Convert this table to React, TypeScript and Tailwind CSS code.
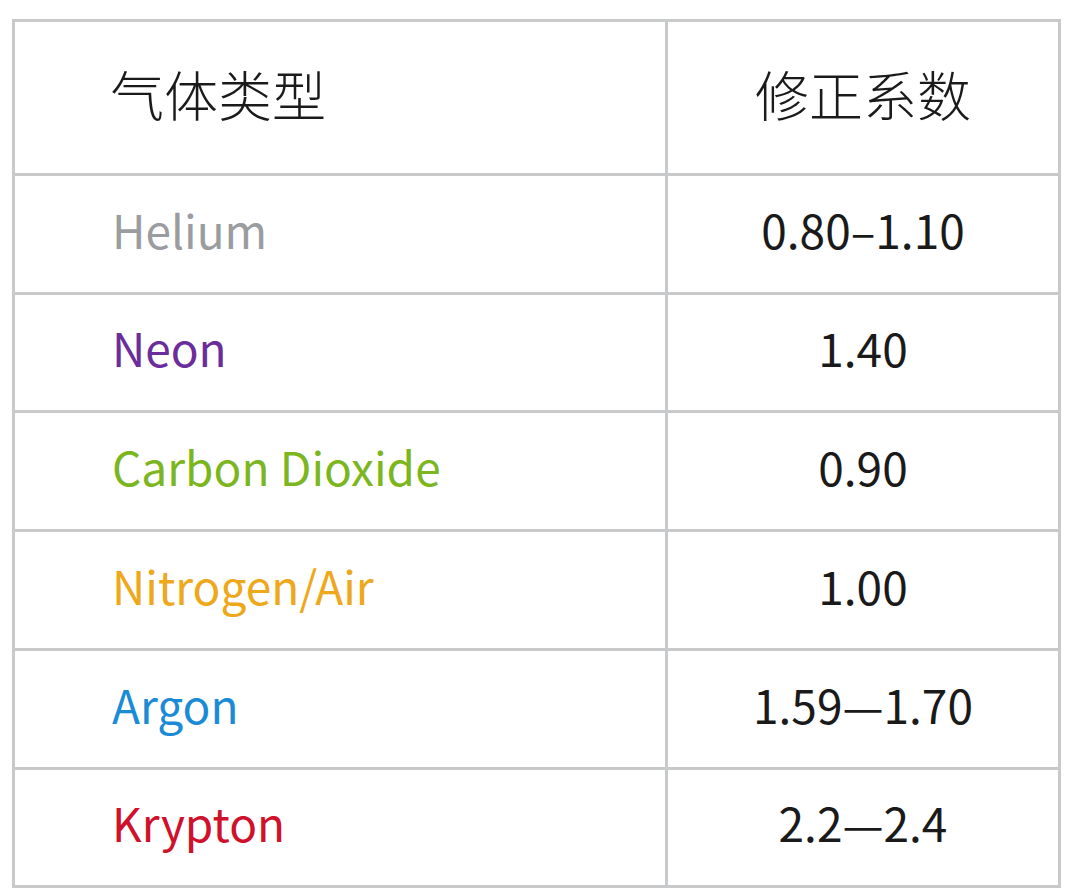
import React from "react";

const rows = [
    {name: "Helium", value: "0.80–1.10", color: "text-[#9a9c9f]"},
    {name: "Neon", value: "1.40", color: "text-[#6b2d9c]"},
    {name: "Carbon Dioxide", value: "0.90", color: "text-[#7cb61f]"},
    {name: "Nitrogen/Air", value: "1.00", color: "text-[#eda81b]"},
    {name: "Argon", value: "1.59—1.70", color: "text-[#1b8bd6]"},
    {name: "Krypton", value: "2.2—2.4", color: "text-[#d0112b]"},
];

export default function App() {
    return (
        <div className="min-h-[896px] bg-white pt-[19px] pl-[12px]"
             style={{fontFamily: '"Noto Sans CJK SC", "Noto Sans", sans-serif'}}>
            <div
                className="grid w-[1049px] grid-cols-[650px_390px] grid-rows-[151px_116px_115px_116px_116px_116px_115px] gap-[3px] bg-[#c7c9cb] p-[3px]">
                {/* header */}
                <div className="flex items-center bg-white pb-[8px] pl-[95px] text-[54px] font-light text-[#1a1a1a]">气体类型</div>
                <div className="flex items-center justify-center bg-white pb-[8px] text-[54px] font-light text-[#1a1a1a]">修正系数</div>
                {rows.map((r) => (
                    <React.Fragment key={r.name}>
                        <div className={`flex items-center bg-white pb-[10px] pl-[97px] text-[46px] ${r.color}`}>{r.name}</div>
                        <div className="flex items-center justify-center bg-white pb-[10px] text-[46px] text-[#1a1a1a]">{r.value}</div>
                    </React.Fragment>
                ))}
            </div>
        </div>
    );
}
